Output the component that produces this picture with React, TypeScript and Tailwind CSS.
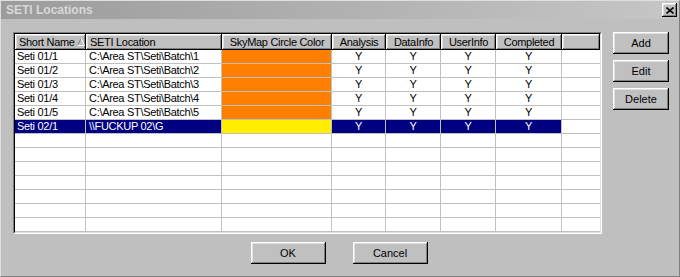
import React from 'react';

type Col = { key: string; title: string; width: number; align: 'left' | 'center' };

const columns: Col[] = [
    { key: 'name', title: 'Short Name', width: 71, align: 'left' },
    { key: 'path', title: 'SETI Location', width: 136, align: 'left' },
    { key: 'color', title: 'SkyMap Circle Color', width: 110, align: 'center' },
    { key: 'analysis', title: 'Analysis', width: 54, align: 'center' },
    { key: 'data', title: 'DataInfo', width: 55, align: 'center' },
    { key: 'user', title: 'UserInfo', width: 55, align: 'center' },
    { key: 'done', title: 'Completed', width: 66, align: 'center' },
];

type Row = { name: string; path: string; color: string; selected?: boolean };

const rows: Row[] = [
    { name: 'Seti 01/1', path: 'C:\\Area ST\\Seti\\Batch\\1', color: '#ff8000' },
    { name: 'Seti 01/2', path: 'C:\\Area ST\\Seti\\Batch\\2', color: '#ff8000' },
    { name: 'Seti 01/3', path: 'C:\\Area ST\\Seti\\Batch\\3', color: '#ff8000' },
    { name: 'Seti 01/4', path: 'C:\\Area ST\\Seti\\Batch\\4', color: '#ff8000' },
    { name: 'Seti 01/5', path: 'C:\\Area ST\\Seti\\Batch\\5', color: '#ff8000' },
    { name: 'Seti 02/1', path: '\\\\FUCKUP 02\\G', color: '#ffee00', selected: true },
];

const raised =
    'bg-[#c0c0c0] shadow-[inset_-1px_-1px_0_0_#000,inset_1px_1px_0_0_#fff,inset_-2px_-2px_0_0_#808080,inset_2px_2px_0_0_#dfdfdf]';

const Button: React.FC<{ label: string; className: string }> = ({ label, className }) => (
    <button className={`${raised} ${className} flex items-center justify-center text-[11px] text-black`}>
        {label}
    </button>
);

const SortArrow = () => (
    <svg width="8" height="8" viewBox="0 0 8 8" className="ml-[2px] shrink-0">
        <path d="M0.5 7.5 L4 0.5" stroke="#808080" strokeWidth="1" fill="none" />
        <path d="M4 0.5 L7.5 7.5 L0.5 7.5" stroke="#ffffff" strokeWidth="1" fill="none" />
    </svg>
);

const HeaderCell: React.FC<{ col: Col }> = ({ col }) => (
    <div
        style={{ width: col.width }}
        className={`${raised} h-[16px] shrink-0 flex items-center overflow-hidden whitespace-nowrap ${col.align === 'left' ? 'pl-[4px]' : 'justify-center'}`}
    >
        <span>{col.title}</span>
        {col.key === 'name' && <SortArrow />}
    </div>
);

const DataRow: React.FC<{ row?: Row }> = ({ row }) => {
    const sel = row?.selected;
    const cellBase = 'h-[14px] shrink-0 border-r border-b border-[#c0c0c0] flex items-center overflow-hidden whitespace-nowrap';
    const fill = sel ? 'bg-[#000080] text-white' : 'bg-white text-black';
    return (
        <div className="flex">
            {columns.map((col) => {
                if (col.key === 'color') {
                    return (
                        <div
                            key={col.key}
                            style={{ width: col.width, backgroundColor: row ? row.color : '#ffffff' }}
                            className={cellBase}
                        />
                    );
                }
                let text = '';
                if (row) {
                    if (col.key === 'name') text = row.name;
                    else if (col.key === 'path') text = row.path;
                    else text = 'Y';
                }
                return (
                    <div
                        key={col.key}
                        style={{ width: col.width }}
                        className={`${cellBase} ${fill} ${col.align === 'left' ? (col.key === 'name' ? 'pl-[2px]' : 'pl-[3px]') : 'justify-center'}`}
                    >
                        {text}
                    </div>
                );
            })}
            <div className="h-[14px] flex-1 border-b border-[#c0c0c0] bg-white" />
        </div>
    );
};

export default function App() {
    const blanks = Array.from({ length: 8 });
    return (
        <div
            className="w-[680px] h-[277px] bg-[#bfbfbf] border-l border-t border-l-[#dfdfdf] border-t-[#dfdfdf] border-r border-b border-r-[#808080] border-b-[#808080] flex flex-col text-[11px] text-black overflow-hidden"
            style={{ fontFamily: '"Liberation Sans", Arial, sans-serif' }}
        >
            {/* title bar */}
            <div className="h-[18px] flex items-center justify-between bg-gradient-to-r from-[#9c9c9c] to-[#c6c6c6] pl-[5px] pr-[2px]">
                <span className="text-[12px] font-bold text-[#d8d8d8]">SETI Locations</span>
                <div className={`${raised} w-[15px] h-[14px] flex items-center justify-center`}>
                    <svg width="8" height="7" viewBox="0 0 8 7">
                        <path d="M0.5 0.5 L7.5 6.5 M7.5 0.5 L0.5 6.5" stroke="#000" strokeWidth="1.6" />
                    </svg>
                </div>
            </div>

            <div className="flex pl-[12px] pt-[13px]">
                {/* grid */}
                <div className="w-[589px] h-[202px] border-t border-l border-t-[#808080] border-l-[#808080] border-b border-r border-b-white border-r-white">
                    <div className="w-full h-full border-t border-l border-t-black border-l-black border-b border-r border-b-[#dfdfdf] border-r-[#dfdfdf] bg-white overflow-hidden tracking-[-0.3px]">
                        <div className="flex">
                            {columns.map((col) => (
                                <HeaderCell key={col.key} col={col} />
                            ))}
                            <div className={`${raised} h-[16px] flex-1`} />
                        </div>
                        {rows.map((r) => (
                            <DataRow key={r.name} row={r} />
                        ))}
                        {blanks.map((_, i) => (
                            <DataRow key={i} />
                        ))}
                    </div>
                </div>

                {/* side buttons */}
                <div className="ml-[11px] flex flex-col gap-[6px]">
                    <Button label="Add" className="w-[56px] h-[22px]" />
                    <Button label="Edit" className="w-[56px] h-[22px]" />
                    <Button label="Delete" className="w-[56px] h-[22px]" />
                </div>
            </div>

            <div className="flex justify-center gap-[27px] mt-[8px] pr-[2px]">
                <Button label="OK" className="w-[75px] h-[22px]" />
                <Button label="Cancel" className="w-[75px] h-[22px]" />
            </div>
        </div>
    );
}
